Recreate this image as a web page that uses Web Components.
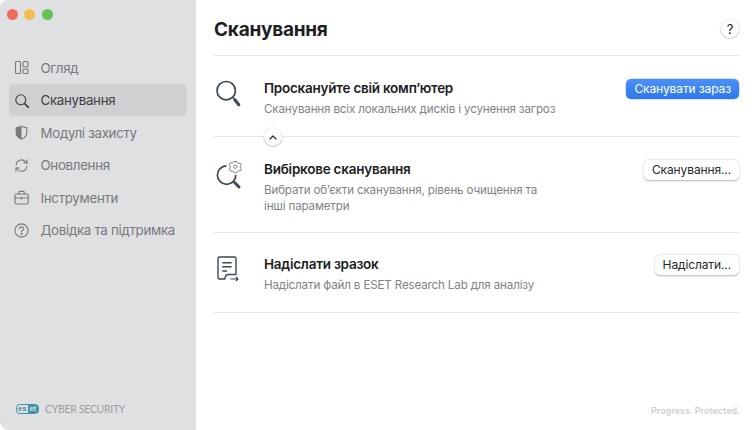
<!DOCTYPE html>
<html lang="uk">
<head>
<meta charset="utf-8">
<title>ESET Cyber Security</title>
<style>
  html, body { margin: 0; height: 430px; overflow: hidden; background: #fff; }
  body { font-family: Inter, "Noto Sans", sans-serif; }
  app-window { width: 756px; height: 430px; }
</style>
</head>
<body>
<app-window>
  <side-bar slot="side">
    <nav-item label="Огляд" icon="overview"></nav-item>
    <nav-item label="Сканування" icon="search" active></nav-item>
    <nav-item label="Модулі захисту" icon="shield"></nav-item>
    <nav-item label="Оновлення" icon="update"></nav-item>
    <nav-item label="Інструменти" icon="tools"></nav-item>
    <nav-item label="Довідка та підтримка" icon="help"></nav-item>
  </side-bar>
  <main-pane>
    <scan-row icon="scan" heading="Проскануйте свій комп’ютер" action="Сканувати зараз" primary collapse style="padding-bottom:19px">
      Сканування всіх локальних дисків і усунення загроз
    </scan-row>
    <scan-row icon="custom" heading="Вибіркове сканування" action="Сканування...">
      Вибрати об’єкти сканування, рівень очищення та<br>інші параметри
    </scan-row>
    <scan-row icon="sample" heading="Надіслати зразок" action="Надіслати..." style="padding:22px 0 19px">
      Надіслати файл в ESET Research Lab для аналізу
    </scan-row>
  </main-pane>
</app-window>

<script>
const NAV_ICONS = {
  overview: '<rect x="1.500" y="1.500" width="5" height="12" rx="1"/><rect x="9" y="1.500" width="5" height="5.200" rx="1"/><rect x="9" y="9" width="5" height="4.500" rx="1"/>',
  search: '<circle cx="6.800" cy="6.800" r="5"/><path d="M10.500 10.500 14.200 14.200" stroke-width="1.700"/>',
  shield: '<path d="M7.500 1.200c2 .9 3.900 1.300 5.300 1.400v5c0 3-1.700 5.200-5.300 6.600-3.600-1.400-5.300-3.600-5.300-6.600v-5c1.400-.1 3.300-.5 5.300-1.400z"/><path d="M7.500 1.200c-2 .9-3.900 1.300-5.300 1.400v5c0 3 1.700 5.200 5.300 6.600z" fill="currentColor" stroke="none"/>',
  update: '<path d="M2.200 7a5.300 5.300 0 0 1 9.200-3.400L12.800 5"/><path d="M13 1.800V5H9.800"/><path d="M12.800 8.200a5.300 5.300 0 0 1-9.200 3.300L2.200 10"/><path d="M2 13.200V10h3.200"/>',
  tools: '<rect x="1" y="4" width="13.200" height="10" rx="1.400"/><path d="M5 4V2.200c0-.5.3-.8.8-.8h3.600c.5 0 .8.3.8.8V4M1 8h13.200M7.600 7v2"/>',
  help: '<circle cx="7.500" cy="7.500" r="6.600"/><path d="M5.600 5.800c0-1.200.9-1.900 2-1.900s2 .7 2 1.800c0 1.500-2 1.600-2 3.200"/><circle cx="7.600" cy="11" r=".5" fill="currentColor"/>'
};

const ROW_ICONS = {
  scan: '<g transform="translate(1 0)"><circle cx="11.200" cy="11.700" r="9.200" stroke-width="1.700"/><path d="M17.800 18.200 19.800 20.500" stroke-width="1.400"/><path d="M19.800 20.800 23.800 25.800" stroke-width="3" stroke-linecap="round"/></g>',
  custom: '<g transform="translate(1 0)"><path d="M11.500 5.900A9.200 9.200 0 1 0 20.800 15" stroke-width="1.700"/><path d="M18 21.200 20 23" stroke-width="1.400"/><path d="M19.800 22.800 24 27" stroke-width="3" stroke-linecap="round"/><path d="M18.800 1.500h3l.5 1.400 1.300.7 1.400-.5 1.400 2.400-1.100.9v1.500l1.100.9-1.400 2.400-1.400-.5-1.300.7-.5 1.400h-3l-.5-1.400-1.300-.7-1.400.5-1.400-2.400 1.100-.9V5.900l-1.100-.9 1.400-2.400 1.400.5 1.300-.7z" stroke="#6b7780" stroke-width=".9" stroke-linejoin="round"/><circle cx="20.300" cy="6.700" r="1.700" stroke="#6b7780" stroke-width=".9"/></g>',
  sample: '<path d="M11 24H5.500A1.500 1.500 0 0 1 4 22.500V3.500A1.500 1.500 0 0 1 5.500 2h15A1.500 1.500 0 0 1 22 3.500V19.500h-7.500c-2 0-3.500 1.500-3.500 4.500z" stroke-width="1.400" stroke-linejoin="round"/><path d="M8.300 7.700h9.400M8.300 11.700h9.400M8.300 16H13" stroke-width="1.400"/><path d="M16.500 24H24M22 22l2 2-2 2" stroke-width="1.200"/>'
};

class AppWindow extends HTMLElement {
  connectedCallback() {
    this.attachShadow({ mode: 'open' });
    this.shadowRoot.innerHTML = `
      <style>
        :host { display: grid; grid-template-columns: 196px 1fr; }
      </style>
      <slot name="side"></slot>
      <slot></slot>`;
  }
}

class SideBar extends HTMLElement {
  connectedCallback() {
    this.attachShadow({ mode: 'open' });
    this.shadowRoot.innerHTML = `
      <style>
        :host {
          display: flex; flex-direction: column; height: 430px; box-sizing: border-box;
          background: #dfe0e2; border-radius: 7px 0 0 9px; padding: 7px 9px 0;
        }
        .lights { display: flex; gap: 6.500px; height: 14px; margin-left: -2.500px; align-items: center; }
        .lights i { width: 11px; height: 11px; border-radius: 50%; }
        nav { display: flex; flex-direction: column; margin-top: 30.500px; }
        footer {
          margin-top: auto; height: 26px; display: flex; align-items: flex-start; gap: 6px; padding-left: 7px;
          color: #9b9ea1; font: 10.500px/11px Lato, sans-serif; letter-spacing: -.3px;
        }
        .logo {
          display: inline-flex; height: 8px; width: 21px; border: 1px solid #3f92a8; border-radius: 3.500px;
          font: 800 7.500px/8px "Liberation Sans", sans-serif; color: #3f92a8; overflow: hidden;
        }
        .logo span { flex: 1; text-align: center; letter-spacing: 0; }
        .logo span + span { background: #3f92a8; color: #dfe0e2; }
      </style>
      <div class="lights">
        <i style="background:#ee6a5f"></i><i style="background:#f5bd4f"></i><i style="background:#61c454"></i>
      </div>
      <nav><slot></slot></nav>
      <footer>
        <span class="logo"><span>es</span><span>et</span></span>
        <span>CYBER SECURITY</span>
      </footer>`;
  }
}

class NavItem extends HTMLElement {
  connectedCallback() {
    this.attachShadow({ mode: 'open' });
    this.shadowRoot.innerHTML = `
      <style>
        :host {
          display: flex; align-items: center; gap: 11.500px; height: 32px; margin-bottom: .5px; padding-left: 5px;
          border-radius: 5px; font-size: 13.300px; letter-spacing: -.3px; color: #77797c; white-space: nowrap;
        }
        :host([active]) { background: #cfd0d2; color: #3d4043; }
        svg { width: 15px; height: 15px; flex: none; }
      </style>
      <svg viewBox="0 0 15 15" fill="none" stroke="currentColor" stroke-width="1.100" stroke-linecap="round" stroke-linejoin="round">${NAV_ICONS[this.getAttribute('icon')]}</svg>
      <span>${this.getAttribute('label')}</span>`;
  }
}

class MainPane extends HTMLElement {
  connectedCallback() {
    this.attachShadow({ mode: 'open' });
    this.shadowRoot.innerHTML = `
      <style>
        :host {
          display: flex; flex-direction: column; height: 430px; box-sizing: border-box;
          padding: 0 17px 0 18px; color: #1d2023;
        }
        header {
          display: flex; justify-content: space-between; align-items: center; height: 52px; padding-top: 3px;
          border-bottom: 1px solid #e6e6e6; flex: none;
        }
        h1 { margin: 0; font-size: 19px; font-weight: 700; letter-spacing: -.25px; }
        .help {
          width: 18px; height: 18px; border-radius: 50%; background: #fff; font-size: 13px;
          display: grid; place-items: center; box-shadow: 0 .5px 2px rgba(0,0,0,.35);
        }
        footer { margin: auto -1px 0 0; height: 25px; text-align: right; font-size: 9px; font-weight: 600; color: #cfcfcf; }
      </style>
      <header><h1>Сканування</h1><span class="help">?</span></header>
      <slot></slot>
      <footer>Progress. Protected.</footer>`;
  }
}

class ScanRow extends HTMLElement {
  connectedCallback() {
    const primary = this.hasAttribute('primary');
    this.attachShadow({ mode: 'open' });
    this.shadowRoot.innerHTML = `
      <style>
        :host {
          display: grid; grid-template-columns: 50px 1fr auto; align-items: start; position: relative;
          padding: 23px 0 18px; border-bottom: 1px solid #e6e6e6;
        }
        svg.icon { display: block; }
        h2 { margin: 0 0 4px; font-size: 13.500px; line-height: 18px; font-weight: 600; letter-spacing: -.24px; color: #1d2023; }
        p { margin: 0; font-size: 11.600px; line-height: 16px; letter-spacing: -.15px; color: #808285; }
        button {
          height: 19.500px; padding: 0 8px; border: 0; border-radius: 5px; font: 12px Inter, sans-serif; letter-spacing: -.12px;
          background: #fff; color: #26282a; box-shadow: 0 .5px 2px rgba(0,0,0,.3);
        }
        button.primary { background: linear-gradient(#4a90f5, #2f78ea); color: #fff; box-shadow: 0 0 0 .5px rgba(40,100,220,.4); }
        .toggle {
          position: absolute; left: 50px; bottom: -10px; width: 18px; height: 18px; border-radius: 50%;
          background: #fff; box-shadow: 0 .5px 2px rgba(0,0,0,.35); display: grid; place-items: center; z-index: 1;
        }
      </style>
      <svg class="icon" width="28" height="32" viewBox="0 0 28 32" fill="none" stroke="#3a4a55">${ROW_ICONS[this.getAttribute('icon')]}</svg>
      <div>
        <h2>${this.getAttribute('heading')}</h2>
        <p><slot></slot></p>
      </div>
      <button class="${primary ? 'primary' : ''}">${this.getAttribute('action')}</button>
      ${this.hasAttribute('collapse') ? `<span class="toggle"><svg width="8" height="5" viewBox="0 0 8 5" fill="none" stroke="#26282a" stroke-width="1.200" stroke-linecap="round" stroke-linejoin="round"><path d="M1 4 4 1l3 3"/></svg></span>` : ''}`;
  }
}

customElements.define('app-window', AppWindow);
customElements.define('side-bar', SideBar);
customElements.define('nav-item', NavItem);
customElements.define('main-pane', MainPane);
customElements.define('scan-row', ScanRow);
</script>
</body>
</html>
